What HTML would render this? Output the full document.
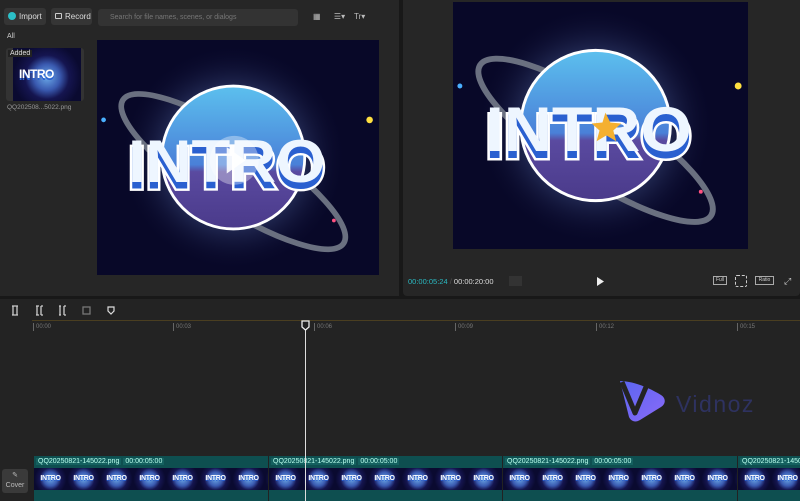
<!DOCTYPE html>
<html><head><meta charset="utf-8"><style>
*{margin:0;padding:0;box-sizing:border-box}
body{width:800px;height:501px;background:#181818;font-family:"Liberation Sans",sans-serif;position:relative;overflow:hidden;color:#ccc}
.abs{position:absolute}
.panel{background:#262626}
.btn{position:absolute;top:8px;height:17px;background:#353535;border-radius:3px;font-size:8px;color:#ddd;line-height:17px}
.art{position:absolute;display:block}
.lbl{position:absolute;top:323px;font-size:6px;color:#777;border-left:1px solid #666;padding-left:2px;line-height:8px}
.clip{position:absolute;top:456px;height:45px;background:#0e4f50;border-left:1px solid #222}
.clip .h{font-size:7px;color:#bfe;position:absolute;top:2px;left:2px;white-space:nowrap}
.clip .h span{background:#14605f;padding:0 2px;margin-right:2px}
.frames{position:absolute;top:12px;left:0;right:0;height:22px;background:#0a0a30;display:flex;overflow:hidden}
.fr{width:33px;flex:none;height:22px;background:radial-gradient(circle at 50% 50%,#6aa8e8 0,#3a5ab0 7px,#151550 11px,#0a0a30 16px);font-size:7px;font-weight:bold;color:#fff;text-align:center;line-height:22px;letter-spacing:-0.3px;text-shadow:0 1px 0 #2a60d0}
</style></head><body>

<div class="abs panel" style="left:0;top:0;width:399px;height:296px"></div>
<div class="btn" style="left:4px;width:42px"><span style="display:inline-block;width:8px;height:8px;border-radius:50%;background:#2cc0c8;margin:0 3px 0 4px;vertical-align:-1px"></span>Import</div>
<div class="btn" style="left:51px;width:41px;padding-left:4px"><span style="display:inline-block;width:7px;height:6px;border:1px solid #ccc;border-radius:1px;margin-right:3px"></span>Record</div>
<div class="abs" style="left:98px;top:9px;width:200px;height:17px;background:#333;border-radius:3px;font-size:7px;color:#777;line-height:17px;padding-left:12px">Search for file names, scenes, or dialogs</div>
<div class="abs" style="left:313px;top:12px;font-size:8px;color:#bbb">▦ &nbsp;&nbsp;&nbsp;&nbsp;&nbsp;☰▾ &nbsp;&nbsp;&nbsp;Tr▾</div>
<div class="abs" style="left:7px;top:33px;font-size:7px;color:#ccc">All</div>
<div class="abs" style="left:6px;top:48px;width:78px;height:53px;background:#333;border-radius:3px;overflow:hidden">
 <div style="position:absolute;left:7px;top:0;width:68px;height:53px;background:radial-gradient(circle at 50% 55%,#6aa8e8 0,#3a5ab0 13px,#151550 22px,#0a0a30 34px)"></div>
 <div style="position:absolute;left:13px;top:19px;font-size:12px;font-weight:bold;color:#fff;letter-spacing:-0.5px;text-shadow:0 2px 0 #2a60d0">INTRO</div>
 <div style="position:absolute;left:2px;top:2px;background:#222;font-size:7px;color:#ddd;padding:0 2px">Added</div>
</div>
<div class="abs" style="left:7px;top:104px;font-size:6.5px;color:#999">QQ202508...5022.png</div>

<svg class="art" style="left:97px;top:40px" width="282" height="235" viewBox="0 0 300 250" preserveAspectRatio="none">
 <defs><radialGradient id="g1" cx="50%" cy="50%" r="50%"><stop offset="0" stop-color="#fff" stop-opacity=".85"/><stop offset=".45" stop-color="#8ab0ff" stop-opacity=".4"/><stop offset="1" stop-color="#0a0a30" stop-opacity="0"/></radialGradient>
 <linearGradient id="p1" x1="0" y1="0" x2="0" y2="1"><stop offset="0" stop-color="#5cc0ee"/><stop offset=".55" stop-color="#4a80d8"/><stop offset=".6" stop-color="#5a4aa0"/><stop offset="1" stop-color="#4a3a8a"/></linearGradient></defs>
 <rect width="300" height="250" fill="#080828"/>
 <circle cx="145" cy="125" r="120" fill="url(#g1)"/>
 <ellipse cx="145" cy="140" rx="140" ry="38" transform="rotate(33 145 140)" fill="none" stroke="#6a7080" stroke-width="6"/>
 <circle cx="145" cy="125" r="76" fill="url(#p1)" stroke="#fff" stroke-width="3"/>
 <text x="33" y="158" textLength="210" lengthAdjust="spacingAndGlyphs" font-family="Liberation Sans" font-weight="bold" font-size="64" fill="#2a60d0" stroke="#fff" stroke-width="5" paint-order="stroke">INTRO</text>
 <text x="33" y="151" textLength="210" lengthAdjust="spacingAndGlyphs" font-family="Liberation Sans" font-weight="bold" font-size="64" fill="#eef6ff">INTRO</text>
 <circle cx="7" cy="85" r="2.5" fill="#4ab0ff"/><circle cx="290" cy="85" r="3.5" fill="#ffe040"/><circle cx="252" cy="192" r="2" fill="#ff5080"/>
 <circle cx="146" cy="128" r="26" fill="#fff" fill-opacity=".35"/>
 <path d="M138 114 L158 128 L138 142 Z" fill="#fff" fill-opacity=".9"/>
</svg>

<div class="abs panel" style="left:403px;top:0;width:397px;height:296px;border-radius:0 0 4px 4px"></div>
<svg class="art" style="left:453px;top:2px" width="295" height="247" viewBox="0 0 300 250" preserveAspectRatio="none">
 <rect width="300" height="250" fill="#080828"/>
 <circle cx="145" cy="125" r="120" fill="url(#g1)"/>
 <ellipse cx="145" cy="140" rx="140" ry="38" transform="rotate(33 145 140)" fill="none" stroke="#6a7080" stroke-width="6"/>
 <circle cx="145" cy="125" r="76" fill="url(#p1)" stroke="#fff" stroke-width="3"/>
 <text x="33" y="158" textLength="210" lengthAdjust="spacingAndGlyphs" font-family="Liberation Sans" font-weight="bold" font-size="64" fill="#2a60d0" stroke="#fff" stroke-width="5" paint-order="stroke">INTRO</text>
 <text x="33" y="151" textLength="210" lengthAdjust="spacingAndGlyphs" font-family="Liberation Sans" font-weight="bold" font-size="64" fill="#eef6ff">INTRO</text>
 <path d="M155 112 l5 10 11 1 -8 7 3 11 -10 -6 -10 6 3 -11 -8 -7 11 -1z" fill="#f4b030"/>
 <circle cx="7" cy="85" r="2.5" fill="#4ab0ff"/><circle cx="290" cy="85" r="3.5" fill="#ffe040"/><circle cx="252" cy="192" r="2" fill="#ff5080"/>
</svg>
<div class="abs" style="left:408px;top:277px;font-size:7.5px;color:#2ab8c0">00:00:05:24 <span style="color:#555">/</span> <span style="color:#ddd">00:00:20:00</span></div>
<div class="abs" style="left:509px;top:276px;width:13px;height:10px;background:#333"></div>
<svg class="abs" style="left:596px;top:277px" width="8" height="9"><path d="M1 0 L8 4.5 L1 9Z" fill="#eee"/></svg>
<div class="abs" style="left:713px;top:276px;width:14px;height:9px;border:1px solid #aaa;font-size:5px;color:#ccc;text-align:center;line-height:7px">Full</div>
<div class="abs" style="left:735px;top:275px;width:12px;height:12px;border:1px dashed #ccc;border-radius:2px"></div>
<div class="abs" style="left:755px;top:276px;width:19px;height:9px;border:1px solid #aaa;font-size:5px;color:#ccc;text-align:center;line-height:7px">Ratio</div>
<div class="abs" style="left:784px;top:276px;font-size:9px;color:#ccc">⤢</div>

<div class="abs" style="left:0;top:299px;width:800px;height:202px;background:#232323"></div>
<svg class="abs" style="left:10px;top:305px" width="110" height="12" fill="none" stroke="#ccc" stroke-width="1.3">
 <path d="M3 1v9M7 1v9M2 1h6M2 10h6"/>
 <path d="M27 1v9M31 1v9M26 1h3M26 10h3M31 1h2M31 10h2"/>
 <path d="M50 1v9M54 1v9M49 1h2M49 10h2M54 1h2M54 10h2"/>
 <rect x="73" y="2" width="7" height="7" stroke="#777"/>
</svg>
<svg class="abs" style="left:107px;top:306px" width="8" height="9"><path d="M1 1h6v4l-3 3-3-3z" fill="none" stroke="#ddd" stroke-width="1.2"/></svg>
<div class="abs" style="left:32px;top:320px;width:768px;height:1px;background:#4a3e20"></div>
<div class="lbl" style="left:33px">00:00</div>
<div class="lbl" style="left:173px">00:03</div>
<div class="lbl" style="left:314px">00:06</div>
<div class="lbl" style="left:455px">00:09</div>
<div class="lbl" style="left:596px">00:12</div>
<div class="lbl" style="left:737px">00:15</div>

<svg class="abs" style="left:616px;top:379px" width="50" height="44" viewBox="0 0 50 44">
 <defs><linearGradient id="vg" x1="0" y1="0" x2="1" y2="1"><stop offset="0" stop-color="#5a66f0"/><stop offset="1" stop-color="#8a6af8"/></linearGradient></defs>
 <path d="M4 2 C16 2 32 8 45 16 C50 19 50 25 45 28 L24 41 C19 44 15 42 13 38 Z" fill="url(#vg)"/>
 <path d="M6 3 L19 34 L30 8" fill="none" stroke="#232323" stroke-width="5" stroke-linejoin="round"/>
</svg>
<div class="abs" style="left:676px;top:391px;font-size:23px;color:#2e3260;letter-spacing:1.5px">Vidnoz</div>

<div class="abs" style="left:2px;top:469px;width:26px;height:24px;background:#3a3a3a;border-radius:3px;font-size:7px;color:#bbb;text-align:center;line-height:10px;padding-top:2px">✎<br>Cover</div>

<div class="clip" style="left:33px;width:235px"><div class="h"><span>QQ20250821-145022.png</span><span>00:00:05:00</span></div><div class="frames"><div class="fr">INTRO</div><div class="fr">INTRO</div><div class="fr">INTRO</div><div class="fr">INTRO</div><div class="fr">INTRO</div><div class="fr">INTRO</div><div class="fr">INTRO</div><div class="fr">INTRO</div></div></div>
<div class="clip" style="left:268px;width:234px"><div class="h"><span>QQ20250821-145022.png</span><span>00:00:05:00</span></div><div class="frames"><div class="fr">INTRO</div><div class="fr">INTRO</div><div class="fr">INTRO</div><div class="fr">INTRO</div><div class="fr">INTRO</div><div class="fr">INTRO</div><div class="fr">INTRO</div><div class="fr">INTRO</div></div></div>
<div class="clip" style="left:502px;width:235px"><div class="h"><span>QQ20250821-145022.png</span><span>00:00:05:00</span></div><div class="frames"><div class="fr">INTRO</div><div class="fr">INTRO</div><div class="fr">INTRO</div><div class="fr">INTRO</div><div class="fr">INTRO</div><div class="fr">INTRO</div><div class="fr">INTRO</div><div class="fr">INTRO</div></div></div>
<div class="clip" style="left:737px;width:63px"><div class="h"><span>QQ20250821-145022.png</span></div><div class="frames"><div class="fr">INTRO</div><div class="fr">INTRO</div></div></div>

<div class="abs" style="left:305px;top:326px;width:1px;height:175px;background:#ddd"></div>
<svg class="abs" style="left:301px;top:320px" width="9" height="11"><path d="M1 1h7v6l-3.5 3-3.5-3z" fill="#222" stroke="#eee" stroke-width="1.3"/></svg>
</body></html>
